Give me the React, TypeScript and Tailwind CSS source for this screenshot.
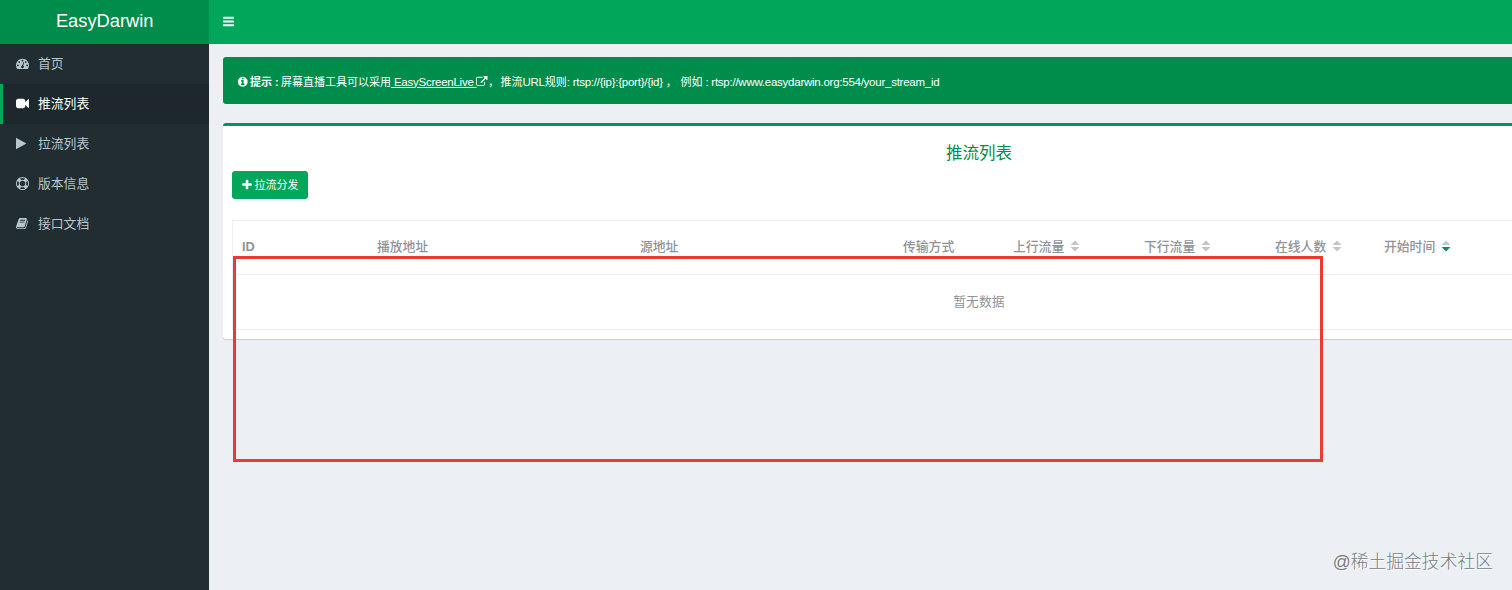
import clsx from 'clsx'

const ICONS = {
  dashboard:
    'M384 1152q0-53-37.5-90.5t-90.5-37.5-90.5 37.5-37.5 90.5 37.5 90.5 90.5 37.5 90.5-37.5 37.5-90.5zm192-448q0-53-37.5-90.5t-90.5-37.5-90.5 37.5-37.5 90.5 37.5 90.5 90.5 37.5 90.5-37.5 37.5-90.5zm428 481l101-382q6-26-7.5-48.5t-38.5-29.5-48 6.5-30 39.5l-101 382q-60 5-107 43.5t-63 98.5q-20 77 20 146t117 89 146-20 89-117q16-60-6-117t-72-91zm660-33q0-53-37.5-90.5t-90.5-37.5-90.5 37.5-37.5 90.5 37.5 90.5 90.5 37.5 90.5-37.5 37.5-90.5zm-640-640q0-53-37.5-90.5t-90.5-37.5-90.5 37.5-37.5 90.5 37.5 90.5 90.5 37.5 90.5-37.5 37.5-90.5zm448 192q0-53-37.5-90.5t-90.5-37.5-90.5 37.5-37.5 90.5 37.5 90.5 90.5 37.5 90.5-37.5 37.5-90.5zm320 448q0 261-141 483-19 29-54 29h-1402q-35 0-54-29-141-221-141-483 0-182 71-348t191-286 286-191 348-71 348 71 286 191 191 286 71 348z',
  video:
    'M1792 352v1088q0 42-39 59-13 5-25 5-27 0-45-19l-403-403v166q0 119-84.5 203.5t-203.5 84.5h-704q-119 0-203.5-84.5t-84.5-203.5v-704q0-119 84.5-203.5t203.5-84.5h704q119 0 203.5 84.5t84.5 203.5v165l403-402q18-19 45-19 12 0 25 5 39 17 39 59z',
  play: 'M1384 927l-1328 738q-23 13-39.5 3t-16.5-36v-1472q0-26 16.5-36t39.5 3l1328 738q23 13 23 31t-23 31z',
  support:
    'M896 0q182 0 348 71t286 191 191 286 71 348-71 348-191 286-286 191-348 71-348-71-286-191-191-286-71-348 71-348 191-286 286-191 348-71zm0 128q-190 0-361 90l194 194q82-28 167-28t167 28l194-194q-171-90-361-90zm-678 1129l194-194q-28-82-28-167t28-167l-194-194q-90 171-90 361t90 361zm678 407q190 0 361-90l-194-194q-82 28-167 28t-167-28l-194 194q171 90 361 90zm0-384q159 0 271.5-112.5t112.5-271.5-112.5-271.5-271.5-112.5-271.5 112.5-112.5 271.5 112.5 271.5 271.5 112.5zm484-217l194 194q90-171 90-361t-90-361l-194 194q28 82 28 167t-28 167z',
  book: 'M1639 478q40 57 18 129l-275 906q-19 64-76.5 107.5t-122.5 43.5h-923q-77 0-148.5-53.5t-99.5-131.5q-24-67-2-127 0-4 3-27t4-37q1-8-3-21.5t-3-19.5q2-11 8-21t16.5-23.5 16.5-23.5q23-38 45-91.5t30-91.5q3-10 .5-30t-.5-28q3-11 17-28t17-23q21-36 42-92t25-90q1-9-2.5-32t.5-28q4-13 22-30.5t22-22.5q19-26 42.5-84.5t27.5-96.5q1-8-3-25.5t-2-26.5q2-8 9-18t18-23 17-21q8-12 16.5-30.5t15-35 16-36 19.5-32 26.5-23.5 36-11.5 47.5 5.5l-1 3q38-9 51-9h761q74 0 114 56t18 130l-274 906q-36 119-71.5 153.5t-128.5 34.5h-869q-27 0-38 15-11 16-1 43 24 70 144 70h923q29 0 56-15.5t35-41.5l300-987q7-22 5-57 38 15 59 43zm-1064 2q-4 13 2 22.5t20 9.5h608q13 0 25.5-9.5t16.5-22.5l21-64q4-13-2-22.5t-20-9.5h-608q-13 0-25.5 9.5t-16.5 22.5zm-83 256q-4 13 2 22.5t20 9.5h608q13 0 25.5-9.5t16.5-22.5l21-64q4-13-2-22.5t-20-9.5h-608q-13 0-25.5 9.5t-16.5 22.5z',
  info: 'M1152 1376v-160q0-14-9-23t-23-9h-96v-512q0-14-9-23t-23-9h-320q-14 0-23 9t-9 23v160q0 14 9 23t23 9h96v320h-96q-14 0-23 9t-9 23v160q0 14 9 23t23 9h448q14 0 23-9t9-23zm-128-896v-160q0-14-9-23t-23-9h-192q-14 0-23 9t-9 23v160q0 14 9 23t23 9h192q14 0 23-9t9-23zm640 416q0 209-103 385.5t-279.5 279.5-385.5 103-385.5-103-279.5-279.5-103-385.5 103-385.5 279.5-279.5 385.5-103 385.5 103 279.5 279.5 103 385.5z',
  plus: 'M1600 736v192q0 40-28 68t-68 28h-416v416q0 40-28 68t-68 28h-192q-40 0-68-28t-28-68v-416h-416q-40 0-68-28t-28-68v-192q0-40 28-68t68-28h416v-416q0-40 28-68t68-28h192q40 0 68 28t28 68v416h416q40 0 68 28t28 68z',
  bars: 'M1664 1344v128q0 26-19 45t-45 19h-1408q-26 0-45-19t-19-45v-128q0-26 19-45t45-19h1408q26 0 45 19t19 45zm0-512v128q0 26-19 45t-45 19h-1408q-26 0-45-19t-19-45v-128q0-26 19-45t45-19h1408q26 0 45 19t19 45zm0-512v128q0 26-19 45t-45 19h-1408q-26 0-45-19t-19-45v-128q0-26 19-45t45-19h1408q26 0 45 19t19 45z',
  external:
    'M1408 928v320q0 119-84.5 203.5t-203.5 84.5h-832q-119 0-203.5-84.5t-84.5-203.5v-832q0-119 84.5-203.5t203.5-84.5h704q14 0 23 9t9 23v64q0 14-9 23t-23 9h-704q-66 0-113 47t-47 113v832q0 66 47 113t113 47h832q66 0 113-47t47-113v-320q0-14 9-23t23-9h64q14 0 23 9t9 23zm384-864v512q0 26-19 45t-45 19-45-19l-176-176-652 652q-10 10-23 10t-23-10l-114-114q-10-10-10-23t10-23l652-652-176-176q-19-19-19-45t19-45 45-19h512q26 0 45 19t19 45z'
}

type IconName = keyof typeof ICONS

function Icon({ name, className }: { name: IconName; className?: string }) {
  return (
    <svg
      viewBox="0 0 1792 1792"
      fill="currentColor"
      className={clsx('shrink-0', className)}
    >
      <path d={ICONS[name]} />
    </svg>
  )
}

const menu: { icon: IconName; label: string; active?: boolean }[] = [
  { icon: 'dashboard', label: '首页' },
  { icon: 'video', label: '推流列表', active: true },
  { icon: 'play', label: '拉流列表' },
  { icon: 'support', label: '版本信息' },
  { icon: 'book', label: '接口文档' }
]

const columns: { label: string; width: string; sort?: 'none' | 'desc' }[] = [
  { label: 'ID', width: 'w-[135px] font-bold' },
  { label: '播放地址', width: 'w-[263px]' },
  { label: '源地址', width: 'w-[263px]' },
  { label: '传输方式', width: 'w-[110px]' },
  { label: '上行流量', width: 'w-[131px]', sort: 'none' },
  { label: '下行流量', width: 'w-[131px]', sort: 'none' },
  { label: '在线人数', width: 'w-[109px]', sort: 'none' },
  { label: '开始时间', width: 'w-[164px]', sort: 'desc' }
]

function SortCaret({ sort }: { sort: 'none' | 'desc' }) {
  return (
    <svg viewBox="0 0 10 12" className="ml-[6px] h-3 w-2.5">
      <path d="M0.5 5L5 0.5L9.5 5z" fill="#c3c5c8" />
      <path
        d="M0.5 7L5 11.5L9.5 7z"
        fill={sort === 'desc' ? '#00965a' : '#c3c5c8'}
      />
    </svg>
  )
}

function Sidebar() {
  return (
    <aside className="flex w-[209.4px] shrink-0 flex-col bg-[#222d32]">
      <div className="flex h-[43.6px] items-center justify-center bg-[#008d4c] pb-[2px] text-[18.3px] text-white">
        EasyDarwin
      </div>
      <nav>
        {menu.map(({ icon, label, active }) => (
          <a
            key={label}
            className={clsx(
              'flex h-10 items-center border-l-3 pl-[13px]',
              active
                ? 'border-[#00a65a] bg-[#1e282c] text-white'
                : 'border-transparent text-[#b8c7ce]'
            )}
          >
            <Icon name={icon} className="size-[13px]" />
            <span className="ml-[9px]">{label}</span>
          </a>
        ))}
      </nav>
    </aside>
  )
}

function Callout() {
  return (
    <div className="flex h-[47px] items-center rounded-[3px] bg-[#008d4c] pt-[3px] pl-[14px] text-[11px] whitespace-pre text-white">
      <Icon name="info" className="size-[11.5px]" />
      <b className="ml-[1.5px] w-[31px]">提示 :</b>
      <span>屏幕直播工具可以采用</span>
      <a className="flex items-center underline">
        <span className="text-[11.5px] tracking-[-0.25px]">
          {' EasyScreenLive '}
        </span>
        <Icon name="external" className="size-[11.5px]" />
      </a>
      <span className="w-[12.5px]">，</span>
      <span className="flex w-[180px] items-baseline">
        推流
        <span className="text-[11.5px] tracking-[-0.25px]">URL</span>
        规则
        <span className="text-[11.5px] tracking-[-0.25px]">
          {': rtsp://{ip}:{port}/{id}'}
        </span>
        {' ，'}
      </span>
      <span className="flex items-baseline">
        例如
        <span className="text-[11.5px] tracking-[-0.25px]">
          {' : rtsp://www.easydarwin.org:554/your_stream_id'}
        </span>
      </span>
    </div>
  )
}

function StreamTable() {
  return (
    <div className="mt-[21.2px] border border-[#ebeef5] text-[#909399]">
      <div className="flex h-[54px] items-center border-b border-[#ebeef5] pb-[2px] font-medium">
        {columns.map(({ label, width, sort }) => (
          <div
            key={label}
            className={clsx('flex shrink-0 items-center pl-[9px]', width)}
          >
            {label}
            {sort && <SortCaret sort={sort} />}
          </div>
        ))}
      </div>
      <div className="flex h-[54px] items-center justify-center pb-px">
        暂无数据
      </div>
    </div>
  )
}

export default function App() {
  return (
    <div className="relative flex h-[590px] w-[1512px] overflow-hidden bg-[#ecf0f5] font-['Liberation_Sans','Noto_Sans_CJK_SC',sans-serif] text-[12.8px]">
      <Sidebar />
      <div className="min-w-0 flex-1 overflow-hidden">
        <header className="flex h-[43.6px] items-center bg-[#00a65a] pb-px pl-[13px] text-white">
          <Icon name="bars" className="size-[13px]" />
        </header>
        <main className="w-[1539px] p-[13.6px]">
          <Callout />
          <section className="mt-[19px] h-[216px] rounded-[3px] border-t-3 border-[#00965a] bg-white px-[9px] pt-4 shadow-[0_1px_1px_rgba(0,0,0,0.15)]">
            <h4 className="flex h-[22px] items-center justify-center text-[16.5px] text-[#008d4c]">
              推流列表
            </h4>
            <button className="mt-[7px] flex h-[27.5px] w-[76px] items-center justify-center gap-px rounded-[3px] bg-[#00a65a] text-[11px] text-white">
              <Icon name="plus" className="size-[12px]" />
              拉流分发
            </button>
            <StreamTable />
          </section>
        </main>
      </div>
      <div className="absolute top-[256px] left-[233px] h-[206px] w-[1090px] border-3 border-[#e93a38]" />
      <div className="absolute right-[19px] bottom-[14px] text-[17.8px] font-light text-[#777b80] [text-shadow:1px_1px_0_#fff]">
        @稀土掘金技术社区
      </div>
    </div>
  )
}
